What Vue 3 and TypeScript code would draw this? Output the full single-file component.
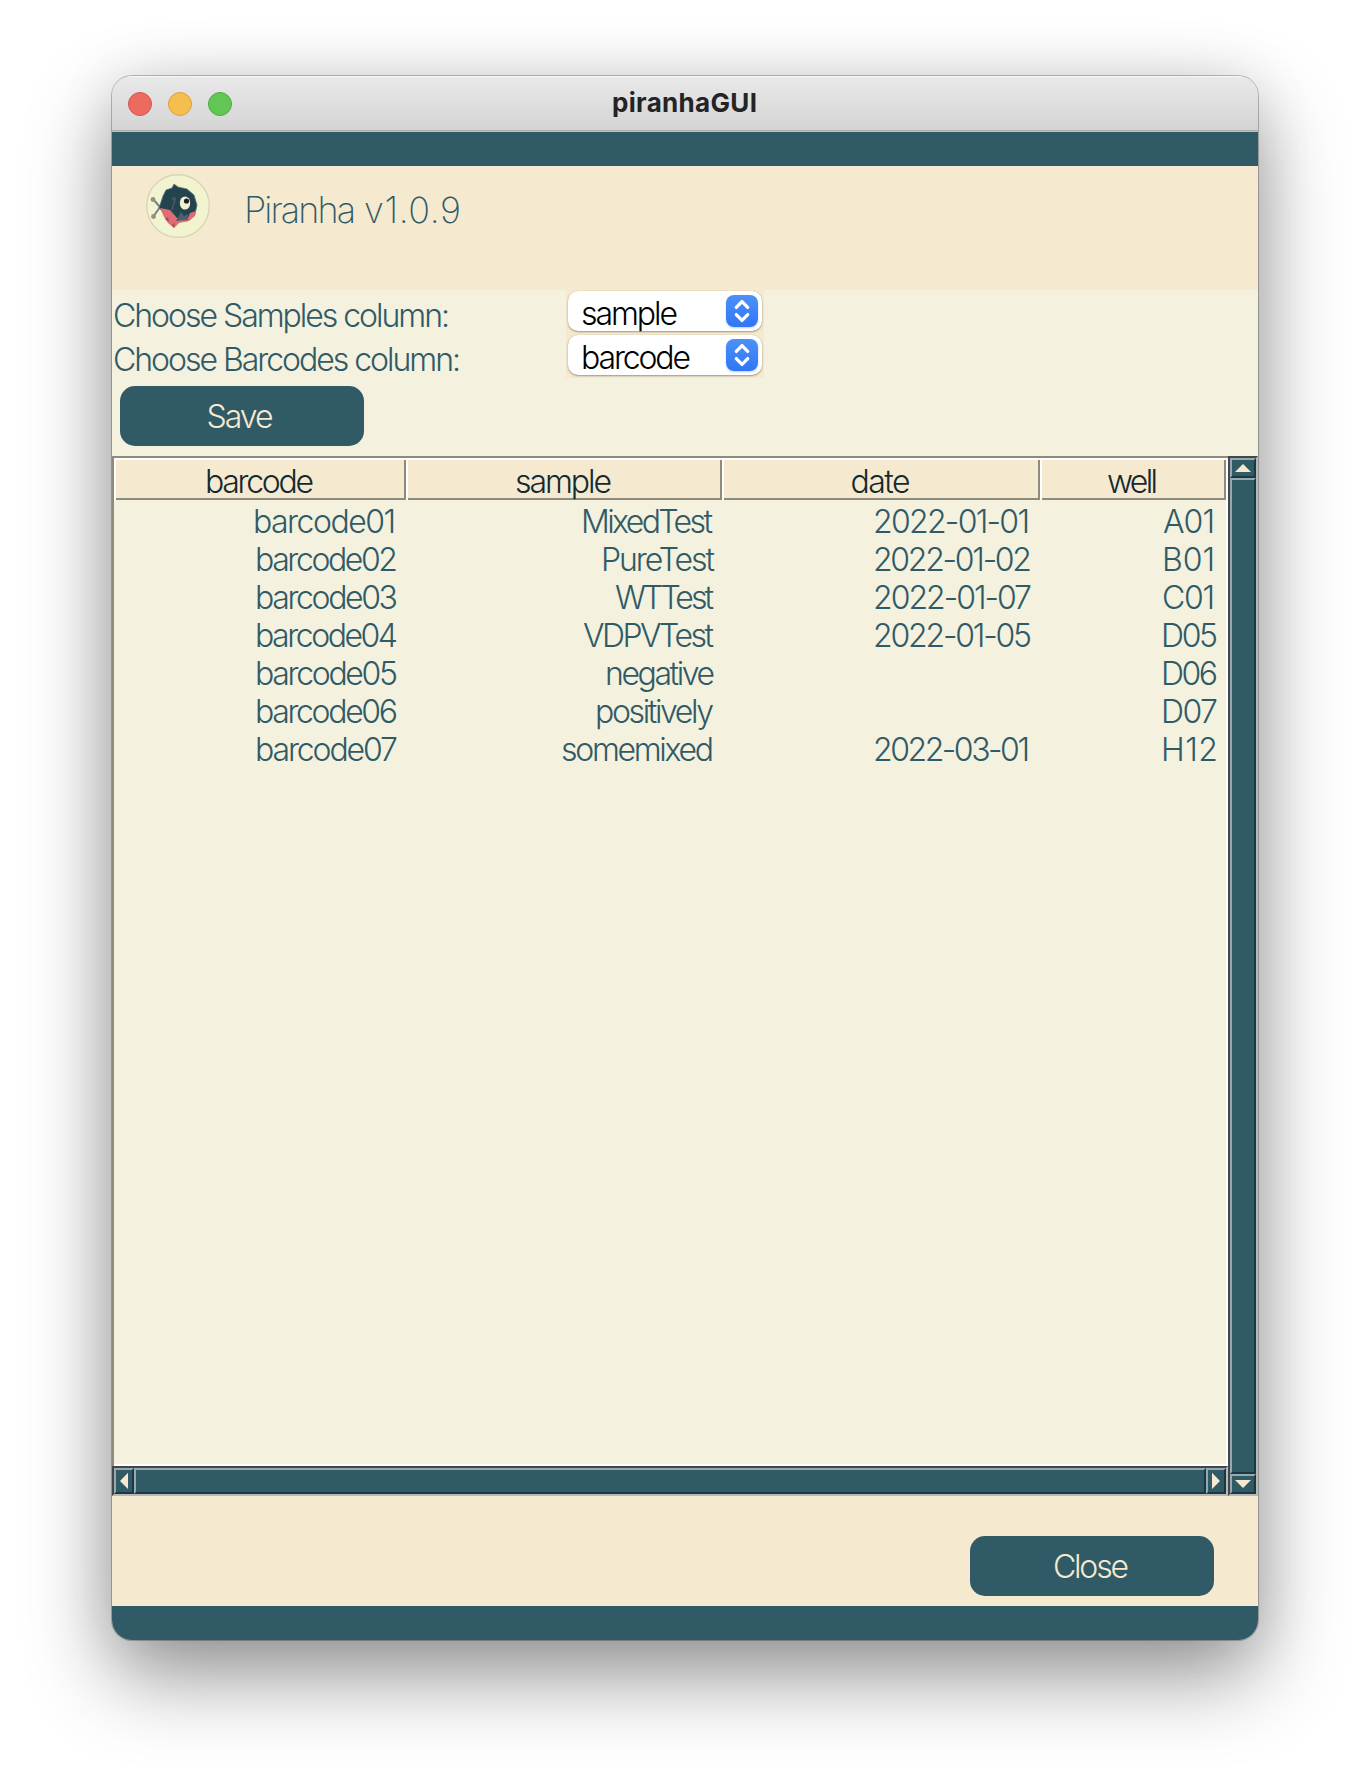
<script setup lang="ts">
import type { Directive } from 'vue'

// Tracks a text run so that its advance width equals the given value.
const applyFit = (el: HTMLElement, width: number) => {
  const count = (el.textContent ?? '').length
  el.style.letterSpacing = '0px'
  const natural = el.getBoundingClientRect().width
  const spacing = (width - natural) / Math.max(count - 1, 1)
  el.style.letterSpacing = `${spacing.toFixed(3)}px`
  el.style.marginRight = `${(-spacing).toFixed(3)}px`
}
const vFit: Directive<HTMLElement, number> = {
  mounted: (el, binding) => applyFit(el, binding.value),
}

interface Cell { text: string; width: number; inset: number }
const cell = (text: string, width: number, inset: number): Cell => ({ text, width, inset })

const headers = [
  { text: 'barcode', width: 109 },
  { text: 'sample', width: 97 },
  { text: 'date', width: 60 },
  { text: 'well', width: 51 },
]

const rows: Cell[][] = [
  [cell('barcode01', 143, 10), cell('MixedTest', 132, 9), cell('2022-01-01', 157, 10), cell('A01', 52, 11)],
  [cell('barcode02', 143, 8), cell('PureTest', 114, 7), cell('2022-01-02', 159, 8), cell('B01', 53, 11)],
  [cell('barcode03', 143, 8), cell('WTTest', 99, 8), cell('2022-01-07', 159, 8), cell('C01', 53, 11)],
  [cell('barcode04', 143, 8), cell('VDPVTest', 131, 8), cell('2022-01-05', 159, 8), cell('D05', 57, 8)],
  [cell('barcode05', 143, 8), cell('negative', 110, 7), cell('', 0, 8), cell('D06', 57, 8)],
  [cell('barcode06', 143, 8), cell('positively', 119, 8), cell('', 0, 8), cell('D07', 57, 8)],
  [cell('barcode07', 143, 8), cell('somemixed', 153, 8), cell('2022-03-01', 157, 10), cell('H12', 57, 8)],
]

const choices = [
  { label: 'Choose Samples column:', labelWidth: 337, value: 'sample', valueWidth: 97 },
  { label: 'Choose Barcodes column:', labelWidth: 348, value: 'barcode', valueWidth: 110 },
]
</script>

<template>
  <div class="desktop">
    <div class="window">
      <header class="titlebar">
        <div class="lights"><i class="red"></i><i class="amber"></i><i class="green"></i></div>
        <span v-fit="145" class="caption">piranhaGUI</span>
      </header>
      <div class="band"></div>

      <div class="brand">
        <svg class="logo" viewBox="0 0 64 64">
          <circle cx="32" cy="32" r="31.3" fill="#f2f3cf" stroke="#d9d5b5" stroke-width="1.4" />
          <g stroke="#71848a" stroke-width="2" fill="none"><path d="M7 25L14 33L7 43M14 33H19" /></g>
          <g fill="#9a8c88"><circle cx="7" cy="25.5" r="2.4" /><circle cx="7.5" cy="42.5" r="2.4" /></g>
          <path d="M13 34L17 22L20 16L26 14L28 10L32 13L41 15L48 21L51 31L49 40L41 47L24 45Z" fill="#23434e" stroke="#5c7278" stroke-width="0.8" />
          <path d="M14 34L24 36L32 45L42 44L44 39L50 37L49 42L43 47L33 49L28 54L22 49L18 43Z" fill="#e06b72" />
          <path d="M30 47L35 38L38 42L42 40L42 46Z" fill="#48626b" />
          <path d="M19 45l3-2 1 5zM26 51l3-2-1 5z" fill="#9d4c57" />
          <path d="M26 36L29 26" stroke="#4c5c65" stroke-width="1.4" />
          <circle cx="28" cy="25" r="2" fill="#4b555d" />
          <ellipse cx="39" cy="29" rx="5.2" ry="6.6" fill="#eef0d4" />
          <circle cx="40.5" cy="27" r="2.6" fill="#241d25" />
        </svg>
        <div class="product"><span v-fit="112">Piranha</span> <span v-fit="97">v1.0.9</span></div>
      </div>

      <section class="form">
        <div v-for="c in choices" :key="c.label" class="choice">
          <label><span v-fit="c.labelWidth">{{ c.label }}</span></label>
          <div class="slot">
            <div class="select">
              <span v-fit="c.valueWidth">{{ c.value }}</span>
              <svg viewBox="0 0 32 32">
                <path d="M10.3 12.4L16 6.6L21.7 12.4M10.3 19.6L16 25.4L21.7 19.6" />
              </svg>
            </div>
          </div>
        </div>
        <button class="btn save"><span v-fit="67">Save</span></button>
      </section>

      <section class="grid">
        <div class="sheet">
          <div class="head">
            <div v-for="h in headers" :key="h.text" class="th"><span v-fit="h.width">{{ h.text }}</span></div>
          </div>
          <div v-for="(r, i) in rows" :key="i" class="row">
            <div v-for="(c, j) in r" :key="j" class="td" :style="{ paddingRight: c.inset + 'px' }">
              <span v-if="c.text" v-fit="c.width">{{ c.text }}</span>
            </div>
          </div>
        </div>
        <div class="vbar">
          <div class="arrow"><svg viewBox="0 0 22 16"><path d="M3 12L11 4L19 12Z" /></svg></div>
          <div class="thumb"></div>
          <div class="arrow"><svg viewBox="0 0 22 16"><path d="M3 4L11 12L19 4Z" /></svg></div>
        </div>
        <div class="hbar">
          <div class="arrow"><svg viewBox="0 0 16 22"><path d="M12 2.7L4 11L12 19Z" /></svg></div>
          <div class="thumb"></div>
          <div class="arrow"><svg viewBox="0 0 16 22"><path d="M4 2.7L12 11L4 19Z" /></svg></div>
        </div>
      </section>

      <footer class="foot">
        <button class="btn"><span v-fit="76">Close</span></button>
      </footer>
      <div class="band"></div>
    </div>
  </div>
</template>

<style>
body {
  margin: 0;
  background: #fff;
}
</style>

<style scoped>
.desktop {
  box-sizing: border-box;
  width: 1370px;
  height: 1788px;
  padding: 76px 112px 0;
  overflow: hidden;
  background: #fff;
  font-family: Inter, "Liberation Sans", sans-serif;
  font-size: 32px;
  font-weight: 300;
  color: #305a66;
}
.desktop * {
  box-sizing: border-box;
}
.desktop span {
  display: inline-block;
  white-space: nowrap;
  flex: none;
}
.window {
  width: 1146px;
  height: 1564px;
  border-radius: 20px;
  overflow: hidden;
  background: #f5e9d0;
  box-shadow: 0 0 0 1px rgba(0, 0, 0, 0.24), 0 36px 84px rgba(0, 0, 0, 0.42), 0 0 60px rgba(0, 0, 0, 0.09);
}
.titlebar {
  display: grid;
  grid-template-columns: 1fr auto 1fr;
  align-items: start;
  height: 56px;
  border-top: 1px solid #f7f7f7;
  background: linear-gradient(#e9e9e9, #d4d4d4 53px, #adadad 53px, #adadad 54px, #bcc0c1 54px);
}
.lights {
  display: flex;
  gap: 16px;
  padding: 15px 0 0 16px;
}
.lights i {
  width: 24px;
  height: 24px;
  border-radius: 50%;
  border: 1px solid;
}
.red { background: #ed6a5f; border-color: #d5554b !important; }
.amber { background: #f5bf4f; border-color: #d8a040 !important; }
.green { background: #62c655; border-color: #50a942 !important; }
.caption {
  margin-top: 10px;
  margin-left: -1px;
  font-size: 26px;
  font-weight: 700;
  line-height: 32px;
  color: #242424;
}
.band {
  height: 34px;
  background: #305a66;
}
.brand {
  display: flex;
  align-items: flex-start;
  height: 124px;
  padding: 8px 0 0 34px;
}
.logo {
  width: 64px;
  height: 64px;
  margin-right: 34px;
}
.product {
  display: flex;
  gap: 8px;
  font-size: 36px;
  font-weight: 200;
  line-height: 44px;
  margin-top: 14px;
}
.form {
  height: 166px;
  background: #f4f1df;
}
.choice {
  display: flex;
  height: 44px;
}
.choice label {
  width: 454px;
  padding: 6px 0 0 1px;
  line-height: 40px;
}
.slot {
  width: 198px;
  padding: 1px 2px;
  background: #f5e9d0;
}
.select {
  display: flex;
  justify-content: space-between;
  height: 40px;
  padding: 4px 4px 0 13px;
  border-radius: 10px;
  background: #fff;
  box-shadow: 0 1px 2px rgba(0, 0, 0, 0.35), 0 0 1px rgba(0, 0, 0, 0.2);
  color: #000;
  line-height: 38px;
}
.select svg {
  width: 32px;
  height: 32px;
  border-radius: 8px;
  background: linear-gradient(#4b91f7, #3076f6);
  box-shadow: 0 1px 2px rgba(48, 118, 246, 0.35);
  fill: none;
  stroke: #fff;
  stroke-width: 3.3;
  stroke-linecap: round;
  stroke-linejoin: round;
}
.btn {
  display: flex;
  align-items: center;
  justify-content: center;
  width: 244px;
  height: 60px;
  padding: 1px 2px 0 0;
  margin: 8px 0 0 8px;
  border: 0;
  border-radius: 15px;
  background: #305a66;
  color: #f5e9d0;
  font: inherit;
}
.save {
  padding: 0 4px 0 0;
}
.grid {
  display: grid;
  grid-template-columns: 1116px 30px;
  grid-template-rows: 1010px 30px;
  height: 1040px;
  overflow: hidden;
}
.sheet {
  border: 2px solid #fff;
  border-width: 2px 2px 2px 0;
  background: #f4f1df;
  margin: 2px 0 0 2px;
  outline: 2px solid #8e8b7c;
}
.head,
.row {
  display: grid;
  grid-template-columns: 292px 316px 318px 186px;
}
.th {
  display: flex;
  align-items: center;
  justify-content: center;
  height: 40px;
  border: 2px solid #8e8b7c;
  border-width: 0 2px 2px 0;
  margin-left: 2px;
  background: #f5e9d0;
  box-shadow: -2px 0 #fff;
  color: #132a30;
  padding: 4px 1px 0 0;
}
.row {
  height: 38px;
  line-height: 38px;
}
.td {
  display: flex;
  justify-content: flex-end;
  padding-top: 3px;
}
.vbar,
.hbar {
  display: flex;
  border: 2px solid;
  border-color: #444648 #b5b9ba #b5b9ba #444648;
  background: #305a66;
}
.vbar {
  grid-row: 1 / 3;
  grid-column: 2;
  flex-direction: column;
}
.hbar {
  grid-row: 2;
  grid-column: 1;
}
.arrow,
.thumb {
  border: 2px solid;
  border-color: #94a9b0 #1b3740 #1b3740 #94a9b0;
}
.thumb {
  flex: 1;
}
.vbar .arrow { height: 20px; }
.hbar .arrow { width: 20px; }
.arrow svg {
  display: block;
  width: 100%;
  height: 100%;
  fill: #f5e9d0;
}
.foot {
  display: flex;
  justify-content: flex-end;
  height: 110px;
  padding: 32px 44px 0 0;
}
.foot .btn {
  margin: 8px 0 0;
}
</style>
